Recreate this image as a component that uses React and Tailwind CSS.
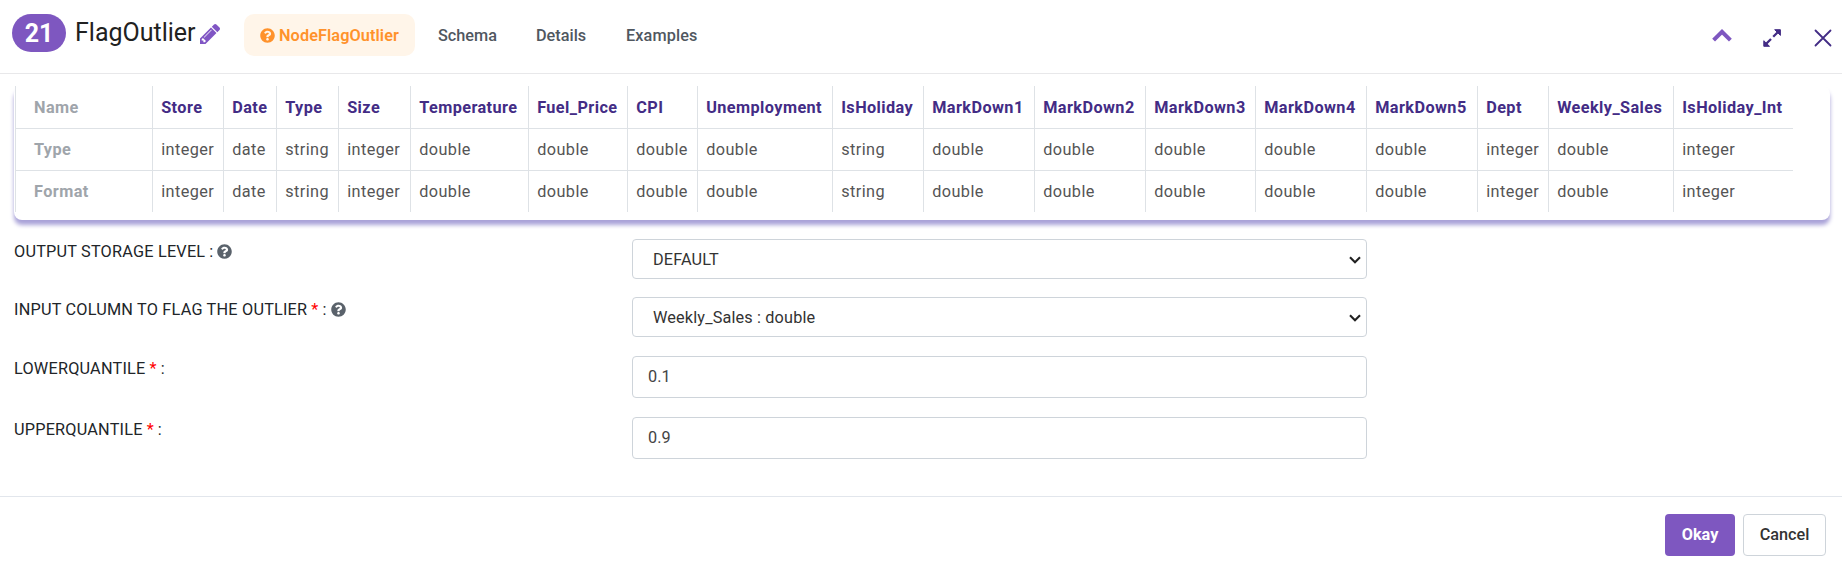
import React from "react";
import { FaQuestionCircle } from "react-icons/fa";

const columns = [
  ["Store", "integer", "w-[71px]"],
  ["Date", "date", "w-[53px]"],
  ["Type", "string", "w-[62px]"],
  ["Size", "integer", "w-[72px]"],
  ["Temperature", "double", "w-[118px]"],
  ["Fuel_Price", "double", "w-[99px]"],
  ["CPI", "double", "w-[70px]"],
  ["Unemployment", "double", "w-[135px]"],
  ["IsHoliday", "string", "w-[91px]"],
  ["MarkDown1", "double", "w-[111px]"],
  ["MarkDown2", "double", "w-[111px]"],
  ["MarkDown3", "double", "w-[110px]"],
  ["MarkDown4", "double", "w-[111px]"],
  ["MarkDown5", "double", "w-[111px]"],
  ["Dept", "integer", "w-[71px]"],
  ["Weekly_Sales", "double", "w-[125px]"],
  ["IsHoliday_Int", "integer", "w-[120px]"],
];

function PencilIcon({ className }) {
  return (
    <svg className={className} viewBox="128 149 1515 1515" fill="currentColor">
      <path d="M491 1536l91-91-235-235-91 91v107h128v128h107zM1014 608q0-22-22-22-10 0-17 7l-542 542q-7 7-7 17 0 22 22 22 10 0 17-7l542-542q7-7 7-17zM960 416l416 416-832 832h-416v-416zM1643 512q0 53-37 90l-166 166-416-416 166-165q36-38 90-38 53 0 91 38l235 234q37 39 37 91z" />
    </svg>
  );
}

function SchemaTable() {
  const label = "border-l border-[#dee2e6] pl-[18px] text-left font-bold text-[#9fa5ab]";
  const cell = "border-l border-[#dee2e6] pl-[8.2px] text-left";
  return (
    <table className="w-[1778px] table-fixed border-separate border-spacing-0 text-[16.25px] leading-6 tracking-[0.42px] whitespace-nowrap">
      <colgroup>
        <col className="w-[137px]" />
        {columns.map(([name, , width]) => (
          <col key={name} className={width} />
        ))}
      </colgroup>
      <tbody>
        <tr className="h-[42px]">
          <th className={`${label} pt-0.5`}>Name</th>
          {columns.map(([name]) => (
            <th key={name} className={`${cell} pt-0.5 font-bold text-[#432c85]`}>{name}</th>
          ))}
        </tr>
        {["Type", "Format"].map((row) => (
          <tr key={row} className="h-[42px]">
            <th className={`${label} border-t`}>{row}</th>
            {columns.map(([name, type]) => (
              <td key={name} className={`${cell} border-t font-normal text-[#555]`}>{type}</td>
            ))}
          </tr>
        ))}
      </tbody>
    </table>
  );
}

function Label({ children, required, help }) {
  return (
    <label className="mt-px flex w-[618px] items-center self-start text-[16.25px] leading-6 tracking-[0.21px] text-[#212529]">
      {children}
      {required && <span className="ml-1 text-[#ff0000]">*</span>}
      <span className="ml-1">:</span>
      {help && <FaQuestionCircle className="mb-0.5 ml-1 size-[15px] text-[#5a626b]" />}
    </label>
  );
}

function Select({ value }) {
  return (
    <div className="flex h-10 w-[735px] items-center justify-between rounded border border-[#ced4da] pr-[5px] pl-5 text-[16.25px] tracking-[0.15px] text-[#333]">
      <span className="pt-0.5">{value}</span>
      <svg className="mt-px h-2 w-3" viewBox="0 0 12 8" fill="none" stroke="#212121" strokeWidth="2.1">
        <path d="M1 1.2 6 6.2 11 1.2" />
      </svg>
    </div>
  );
}

function Input({ value }) {
  return (
    <input
      className="h-[42px] w-[735px] rounded border border-[#ced4da] px-[15px] pb-0.5 text-[16.25px] text-[#444] outline-none"
      defaultValue={value}
    />
  );
}

export default function App() {
  return (
    <div className="flex h-[566px] w-[1842px] flex-col overflow-hidden bg-white font-[Roboto,sans-serif]">
      <header className="flex h-[74px] shrink-0 items-start border-b border-[#e8e8ea] pl-3">
        <span className="mt-3.5 flex h-[38px] w-[54px] items-center justify-center rounded-full bg-[#7e57c0] pt-px text-[25px] font-bold text-white">
          21
        </span>
        <h1 className="mt-[17px] ml-[9px] w-[120px] text-[25px] leading-8 whitespace-nowrap text-[#212121]">FlagOutlier</h1>
        <PencilIcon className="mt-6 ml-[5px] size-5 text-[#8055c4]" />
        <nav className="mt-3.5 ml-6 flex h-[42px] items-center text-[16.25px] font-medium text-[#50575f]">
          <span className="flex h-full w-[171px] items-center gap-1 rounded-[10px] bg-[#fff5e9] pl-4 text-[#ff922b]">
            <FaQuestionCircle className="size-[15px]" />
            <span className="pt-0.5 font-semibold tracking-[0.1px]">NodeFlagOutlier</span>
          </span>
          <span className="ml-[23px] w-[60px] pt-0.5">Schema</span>
          <span className="ml-[38px] w-[52px] pt-0.5">Details</span>
          <span className="ml-[38px] pt-0.5 tracking-[0.1px]">Examples</span>
        </nav>
        <div className="mt-7 mr-2.5 ml-auto flex items-start">
          <svg className="mr-[31px] h-[15px] w-5" viewBox="0 0 20 15" fill="none" stroke="#7e57c0" strokeWidth="4">
            <path d="M1.6 12.2 10 3.8l8.4 8.4" />
          </svg>
          <svg className="mt-px mr-[33px] size-[18px]" viewBox="0 0 18 18" fill="#432c85" stroke="#432c85">
            <path d="M11.7.7h5.7v5.7zM.8 11.7v5.6h5.7z" strokeWidth="1" strokeLinejoin="round" />
            <path d="M15.5 2.5 10.2 7.8M8 10l-5 5" strokeWidth="2.3" />
          </svg>
          <svg className="mt-px size-[18px]" viewBox="0 0 18 18" fill="none" stroke="#432c85" strokeWidth="1.8" strokeLinecap="round">
            <path d="m1.5 1.5 15 15M16.5 1.5l-15 15" />
          </svg>
        </div>
      </header>

      <main className="flex h-[422px] shrink-0 flex-col overflow-hidden pt-3">
        <section className="ml-3.5 h-[134px] w-[1816px] shrink-0 rounded-lg pl-px shadow-[0_5px_4px_#a9a2d8]">
          <SchemaTable />
        </section>
        <form className="flex flex-col pl-3.5">
          <div className="mt-[19px] flex"><Label help>OUTPUT STORAGE LEVEL</Label><Select value="DEFAULT" /></div>
          <div className="mt-[18px] flex"><Label required help>INPUT COLUMN TO FLAG THE OUTLIER</Label><Select value="Weekly_Sales : double" /></div>
          <div className="mt-[19px] flex"><Label required>LOWERQUANTILE</Label><Input value="0.1" /></div>
          <div className="mt-[19px] flex"><Label required>UPPERQUANTILE</Label><Input value="0.9" /></div>
        </form>
      </main>

      <footer className="flex flex-1 items-start justify-end gap-2 border-t border-[#e2e6ec] pt-[17px] pr-4 text-[16.25px]">
        <button className="h-[42px] w-[70px] rounded bg-[#7e57c0] font-bold text-white">Okay</button>
        <button className="h-[42px] w-[83px] rounded border border-[#ced4da] font-medium text-[#333]">Cancel</button>
      </footer>
    </div>
  );
}
